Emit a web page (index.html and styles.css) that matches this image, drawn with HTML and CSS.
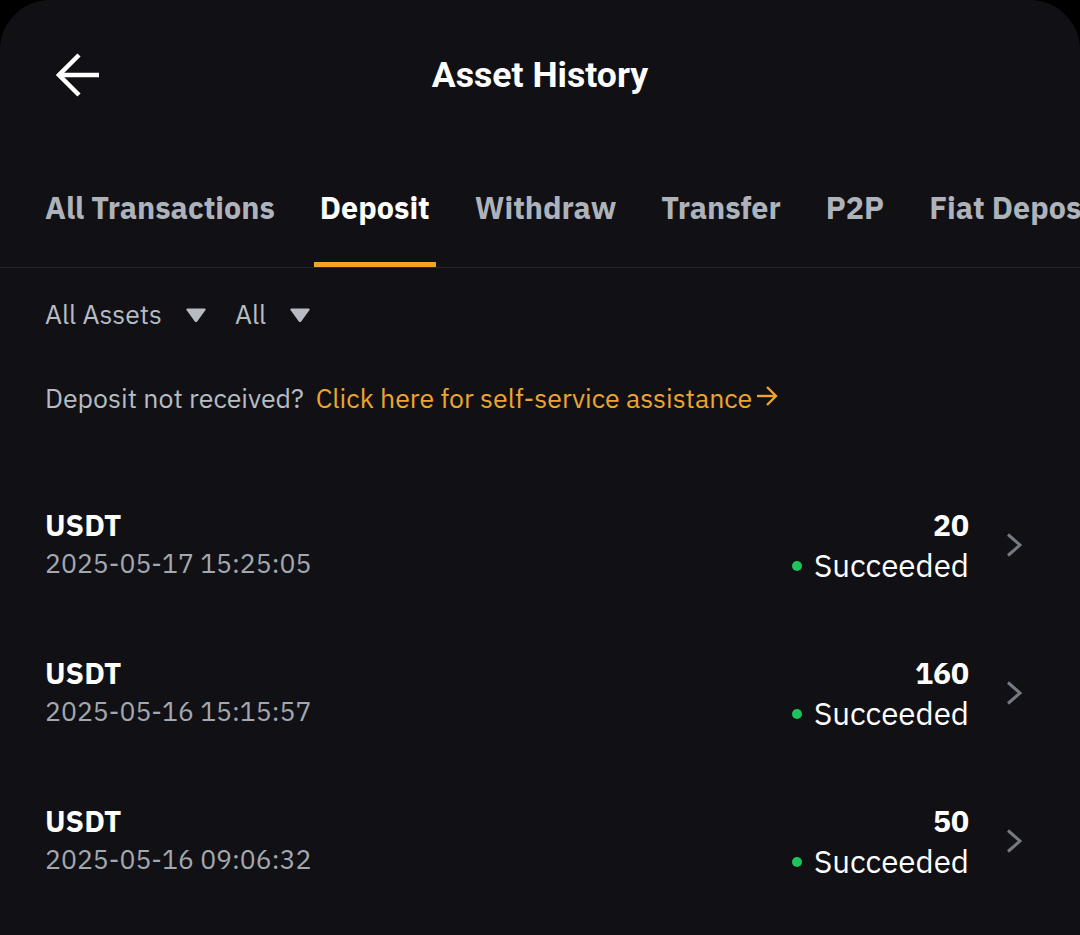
FILE: index.html
```html
<!DOCTYPE html>
<html lang="en">
<head>
<meta charset="utf-8">
<title>Asset History</title>
<link rel="stylesheet" href="styles.css">
</head>
<body>
<div class="screen">
  <header class="header">
    <svg class="back" width="44" height="44" viewBox="0 0 44 44" fill="none" stroke="#ffffff" stroke-width="4.5">
      <path d="M3 22H43"/>
      <path d="M23 2L3 22L23 42"/>
    </svg>
    <h1 class="title">Asset History</h1>
  </header>

  <nav class="tabs">
    <span class="tab">All Transactions</span>
    <span class="tab active">Deposit</span>
    <span class="tab">Withdraw</span>
    <span class="tab">Transfer</span>
    <span class="tab">P2P</span>
    <span class="tab">Fiat Deposit</span>
  </nav>

  <div class="filters">
    <span class="filter">All Assets
      <svg class="tri" width="22" height="16" viewBox="0 0 22 16"><path d="M2.5 1.5H19.5Q21.5 1.5 20.3 3.3L12.4 14.2Q11 16 9.6 14.2L1.7 3.3Q0.5 1.5 2.5 1.5Z" fill="#b7bcc4"/></svg>
    </span>
    <span class="filter">All
      <svg class="tri" width="22" height="16" viewBox="0 0 22 16"><path d="M2.5 1.5H19.5Q21.5 1.5 20.3 3.3L12.4 14.2Q11 16 9.6 14.2L1.7 3.3Q0.5 1.5 2.5 1.5Z" fill="#b7bcc4"/></svg>
    </span>
  </div>

  <p class="notice">Deposit not received? <a class="link">Click here for self-service assistance<svg class="link-arrow" width="22" height="22" viewBox="0 0 22 22" fill="none" stroke="#eca52f" stroke-width="2.4"><path d="M1 11H20"/><path d="M11 2L20 11L11 20"/></svg></a></p>

  <ul class="list">
    <li class="row">
      <div class="left">
        <div class="coin">USDT</div>
        <div class="date">2025-05-17 15:25:05</div>
      </div>
      <div class="right">
        <div class="amount">20</div>
        <div class="status"><span class="dot"></span>Succeeded</div>
      </div>
      <svg class="chev" width="16" height="24" viewBox="0 0 16 24" fill="none" stroke="#767a83" stroke-width="3"><path d="M2 1.5L14 12L2 22.5"/></svg>
    </li>
    <li class="row">
      <div class="left">
        <div class="coin">USDT</div>
        <div class="date">2025-05-16 15:15:57</div>
      </div>
      <div class="right">
        <div class="amount">160</div>
        <div class="status"><span class="dot"></span>Succeeded</div>
      </div>
      <svg class="chev" width="16" height="24" viewBox="0 0 16 24" fill="none" stroke="#767a83" stroke-width="3"><path d="M2 1.5L14 12L2 22.5"/></svg>
    </li>
    <li class="row">
      <div class="left">
        <div class="coin">USDT</div>
        <div class="date">2025-05-16 09:06:32</div>
      </div>
      <div class="right">
        <div class="amount">50</div>
        <div class="status"><span class="dot"></span>Succeeded</div>
      </div>
      <svg class="chev" width="16" height="24" viewBox="0 0 16 24" fill="none" stroke="#767a83" stroke-width="3"><path d="M2 1.5L14 12L2 22.5"/></svg>
    </li>
  </ul>
</div>
</body>
</html>
```

FILE: styles.css
```css
* { box-sizing: border-box; }
html, body { margin: 0; padding: 0; background: #000; }
body {
  font-family: "IBM Plex Sans", Inter, "Noto Sans", sans-serif;
  width: 1080px;
  height: 935px;
  overflow: hidden;
}
.screen {
  width: 1080px;
  height: 935px;
  background: #111115;
  border-radius: 50px 50px 0 0;
  overflow: hidden;
  color: #fff;
}
.header {
  height: 150px;
  display: flex;
  align-items: center;
  position: relative;
  padding-left: 56px;
}
.back { display: block; }
.title {
  position: absolute;
  left: 0;
  right: 0;
  top: 0;
  margin: 0;
  line-height: 150px;
  text-align: center;
  font-family: Roboto, "Noto Sans", sans-serif;
  font-size: 35.6px;
  font-weight: 700;
  pointer-events: none;
}
.tabs {
  display: flex;
  gap: 45px;
  padding-left: 45px;
  height: 118px;
  border-bottom: 1px solid #26262b;
  white-space: nowrap;
  overflow: hidden;
}
.tab {
  position: relative;
  padding-top: 40px;
  line-height: 36px;
  font-size: 30.5px;
  font-weight: 700;
  color: #aeb3bb;
  flex-shrink: 0;
}
.tab.active { color: #fff; }
.tab.active::after {
  content: "";
  position: absolute;
  left: -6px;
  right: -6px;
  bottom: 0;
  height: 5px;
  background: #f0a61f;
}
.filters {
  display: flex;
  gap: 28px;
  padding-left: 45px;
  margin-top: 31px;
  height: 30px;
  align-items: center;
}
.filter {
  display: flex;
  align-items: center;
  gap: 23px;
  font-size: 26.5px;
  line-height: 30px;
  color: #b7bcc4;
}
.tri { display: block; margin-top: 1px; }
.notice {
  margin: 54px 0 0;
  padding-left: 45px;
  font-size: 26.7px;
  line-height: 30px;
  color: #b7bcc4;
  display: flex;
  align-items: center;
  gap: 12px;
}
.link {
  color: #eca52f;
  display: inline-flex;
  align-items: center;
  gap: 4px;
}
.link-arrow { display: block; margin-top: -4px; }
.list {
  list-style: none;
  margin: 58px 0 0;
  padding: 0 58px 0 45px;
}
.row {
  height: 148px;
  display: flex;
  align-items: flex-start;
  padding-top: 37px;
}
.left { flex: 1; }
.coin {
  font-size: 29.7px;
  font-weight: 700;
  line-height: 34px;
}
.date {
  font-size: 26.6px;
  line-height: 42px;
  color: #a3a8b0;
}
.right {
  text-align: right;
  margin-right: 37px;
}
.amount {
  font-size: 30px;
  font-weight: 700;
  line-height: 34px;
}
.status {
  display: flex;
  align-items: center;
  justify-content: flex-end;
  gap: 12px;
  font-size: 31.3px;
  line-height: 48px;
}
.dot {
  width: 10px;
  height: 10px;
  border-radius: 50%;
  background: #1fc35b;
}
.chev {
  display: block;
  align-self: center;
  margin-top: -37px;
}
```
